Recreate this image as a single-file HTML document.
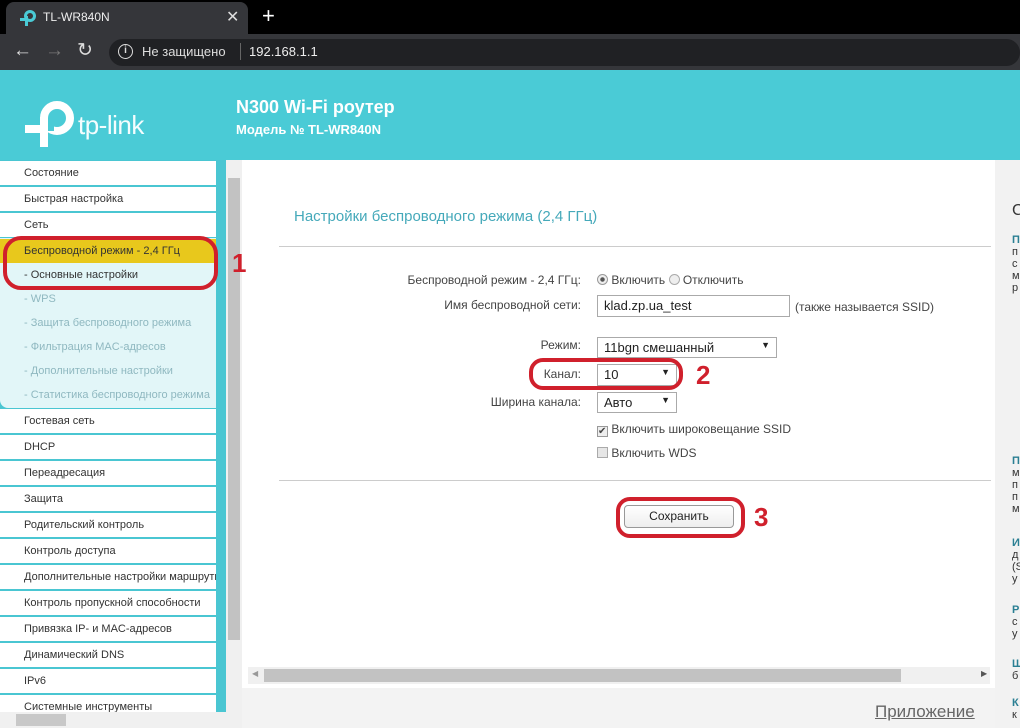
<!DOCTYPE html>
<html><head><meta charset="utf-8"><style>
*{margin:0;padding:0;box-sizing:border-box}
body{width:1020px;height:728px;overflow:hidden;background:#fff;font-family:"Liberation Sans",Arial,sans-serif;position:relative}
.a{position:absolute}
.menu div{position:absolute;left:0;width:216px;font-size:11px;color:#333;padding-left:24px;white-space:nowrap;overflow:hidden}
.lb{position:absolute;right:439px;font-size:12px;color:#444;text-align:right;white-space:nowrap}
.ct{position:absolute;left:597px;font-size:12px;color:#444;white-space:nowrap}
.sel{position:absolute;border:1px solid #aaa;background:#fff;font-size:13px;color:#222;padding:2px 6px}
.sel span{position:absolute;right:6px;top:2px;font-size:9px}
.ring{position:absolute;border:4px solid #d0202c;border-radius:14px}
.num{position:absolute;color:#d0202c;font-weight:bold;font-size:26px}
.rp{position:absolute;left:1012px;font-size:11px;color:#333;line-height:12px}
.rp b{color:#2a7f93}
</style></head><body>
<div class="a" style="left:0;top:0;width:1020px;height:34px;background:#000"></div>
<div class="a" style="left:6px;top:2px;width:242px;height:32px;background:#35363a;border-radius:8px 8px 0 0"></div>
<svg class="a" style="left:19px;top:9px" width="18" height="18" viewBox="0 0 18 18"><circle cx="11" cy="7" r="4.5" fill="none" stroke="#4acbd6" stroke-width="3"/><rect x="6" y="7" width="3" height="10" fill="#4acbd6"/><rect x="1" y="9" width="8" height="3" fill="#4acbd6"/></svg>
<div class="a" style="left:43px;top:10px;font-size:12px;color:#eee">TL-WR840N</div>
<div class="a" style="left:226px;top:7px;font-size:16px;color:#ddd">✕</div>
<div class="a" style="left:262px;top:3px;font-size:22px;color:#fff">+</div>
<div class="a" style="left:0;top:34px;width:1020px;height:36px;background:#35363a"></div>
<div class="a" style="left:13px;top:40px;font-size:19px;color:#ddd">←</div>
<div class="a" style="left:45px;top:40px;font-size:19px;color:#777">→</div>
<div class="a" style="left:77px;top:39px;font-size:19px;color:#ddd">↻</div>
<div class="a" style="left:109px;top:39px;width:911px;height:27px;background:#202124;border-radius:14px"></div>
<div class="a" style="left:118px;top:44px;width:15px;height:15px;border:1.5px solid #ddd;border-radius:50%;font-size:10px;color:#ddd;text-align:center;line-height:12px;font-weight:bold">i</div>
<div class="a" style="left:142px;top:44px;font-size:13px;color:#ddd">Не защищено</div>
<div class="a" style="left:240px;top:43px;width:1px;height:17px;background:#666"></div>
<div class="a" style="left:249px;top:44px;font-size:13px;color:#eee">192.168.1.1</div>
<div class="a" style="left:0;top:70px;width:1020px;height:90px;background:#4acbd6"></div>
<svg class="a" style="left:20px;top:96px" width="60" height="56" viewBox="0 0 60 56"><circle cx="37" cy="22" r="13" fill="none" stroke="#fff" stroke-width="8"/><rect x="20" y="21" width="8" height="30" fill="#fff"/><rect x="5" y="29" width="23" height="8" fill="#fff"/><rect x="28" y="22" width="6" height="13" fill="#4acbd6"/></svg>
<div class="a" style="left:78px;top:110px;font-size:26px;color:#f4fdfe;letter-spacing:-0.5px">tp-link</div>
<div class="a" style="left:236px;top:97px;font-size:18px;color:#fff;font-weight:bold">N300 Wi-Fi роутер</div>
<div class="a" style="left:236px;top:122px;font-size:13px;color:#fff;font-weight:bold">Модель № TL-WR840N</div>
<div class="a" style="left:0;top:160px;width:226px;height:568px;background:#4ac6d2"></div>
<div class="a" style="left:0;top:238px;width:216px;height:170px;background:#e2f6f8;border-radius:0 0 0 8px"></div>
<div class="menu">
<div style="top:161px;height:24px;line-height:24px;background:#fff">Состояние</div>
<div style="top:187px;height:24px;line-height:24px;background:#fff">Быстрая настройка</div>
<div style="top:213px;height:24px;line-height:24px;background:#fff">Сеть</div>
<div style="top:239px;height:24px;line-height:24px;background:#e8c81c">Беспроводной режим - 2,4 ГГц</div>
<div style="top:263px;height:24px;line-height:24px;padding-left:24px">- Основные настройки</div>
<div style="top:287px;height:24px;line-height:24px;color:#8fb8c0">- WPS</div>
<div style="top:311px;height:24px;line-height:24px;color:#8fb8c0">- Защита беспроводного режима</div>
<div style="top:335px;height:24px;line-height:24px;color:#8fb8c0">- Фильтрация MAC-адресов</div>
<div style="top:359px;height:24px;line-height:24px;color:#8fb8c0">- Дополнительные настройки</div>
<div style="top:383px;height:24px;line-height:24px;color:#8fb8c0">- Статистика беспроводного режима</div>
<div style="top:409px;height:24px;line-height:24px;background:#fff">Гостевая сеть</div>
<div style="top:435px;height:24px;line-height:24px;background:#fff">DHCP</div>
<div style="top:461px;height:24px;line-height:24px;background:#fff">Переадресация</div>
<div style="top:487px;height:24px;line-height:24px;background:#fff">Защита</div>
<div style="top:513px;height:24px;line-height:24px;background:#fff">Родительский контроль</div>
<div style="top:539px;height:24px;line-height:24px;background:#fff">Контроль доступа</div>
<div style="top:565px;height:24px;line-height:24px;background:#fff">Дополнительные настройки маршрутизации</div>
<div style="top:591px;height:24px;line-height:24px;background:#fff">Контроль пропускной способности</div>
<div style="top:617px;height:24px;line-height:24px;background:#fff">Привязка IP- и MAC-адресов</div>
<div style="top:643px;height:24px;line-height:24px;background:#fff">Динамический DNS</div>
<div style="top:669px;height:24px;line-height:24px;background:#fff">IPv6</div>
<div style="top:695px;height:18px;line-height:24px;background:#fff">Системные инструменты</div>
</div>
<div class="a" style="left:0;top:712px;width:226px;height:16px;background:#f0f0f0"></div>
<div class="a" style="left:16px;top:714px;width:50px;height:12px;background:#c8c8c8"></div>
<div class="a" style="left:226px;top:160px;width:16px;height:568px;background:#f0f0f0"></div>
<div class="a" style="left:228px;top:178px;width:12px;height:462px;background:#c2c2c2"></div>
<div class="ring" style="left:3px;top:236px;width:215px;height:54px;border-radius:18px"></div>
<div class="num" style="left:232px;top:248px">1</div>
<div class="a" style="left:294px;top:208px;font-size:15px;color:#45a9ba">Настройки беспроводного режима (2,4 ГГц)</div>
<div class="a" style="left:279px;top:246px;width:712px;height:1px;background:#ccc"></div>
<div class="lb" style="top:273px">Беспроводной режим - 2,4 ГГц:</div>
<div class="ct" style="top:273px"><span style="display:inline-block;width:11px;height:11px;border:1px solid #999;border-radius:50%;background:radial-gradient(#555 30%,#eee 40%);vertical-align:-1px"></span> Включить <span style="display:inline-block;width:11px;height:11px;border:1px solid #aaa;border-radius:50%;background:#eee;vertical-align:-1px"></span> Отключить</div>
<div class="lb" style="top:298px">Имя беспроводной сети:</div>
<div class="sel" style="left:597px;top:295px;width:193px;height:22px;font-size:13px">klad.zp.ua_test</div>
<div class="a" style="left:795px;top:300px;font-size:12px;color:#444">(также называется SSID)</div>
<div class="lb" style="top:338px">Режим:</div>
<div class="sel" style="left:597px;top:337px;width:180px;height:21px">11bgn смешанный<span>▼</span></div>
<div class="lb" style="top:367px">Канал:</div>
<div class="sel" style="left:597px;top:364px;width:80px;height:22px">10<span>▼</span></div>
<div class="lb" style="top:395px">Ширина канала:</div>
<div class="sel" style="left:597px;top:392px;width:80px;height:21px">Авто<span>▼</span></div>
<div class="ct" style="top:422px"><span style="display:inline-block;width:11px;height:11px;border:1px solid #999;background:#eee;vertical-align:-1px;font-size:10px;line-height:9px">✔</span> Включить широковещание SSID</div>
<div class="ct" style="top:446px"><span style="display:inline-block;width:11px;height:11px;border:1px solid #aaa;background:#e6e6e6;vertical-align:-1px"></span> Включить WDS</div>
<div class="ring" style="left:529px;top:358px;width:154px;height:32px;border-radius:14px"></div>
<div class="num" style="left:696px;top:360px">2</div>
<div class="a" style="left:279px;top:480px;width:712px;height:1px;background:#ccc"></div>
<div class="a" style="left:624px;top:505px;width:110px;height:23px;border:1px solid #999;border-radius:4px;background:linear-gradient(#fff,#eee);font-size:12px;text-align:center;line-height:21px;color:#222">Сохранить</div>
<div class="ring" style="left:616px;top:497px;width:129px;height:41px;border-radius:14px"></div>
<div class="num" style="left:754px;top:502px">3</div>
<div class="a" style="left:248px;top:667px;width:742px;height:17px;background:#f0f0f0"></div>
<div class="a" style="left:264px;top:669px;width:637px;height:13px;background:#c2c2c2"></div>
<div class="a" style="left:252px;top:669px;font-size:8px;color:#999">◀</div>
<div class="a" style="left:981px;top:669px;font-size:8px;color:#555">▶</div>
<div class="a" style="left:242px;top:688px;width:753px;height:40px;background:#f3f3f3"></div>
<div class="a" style="left:875px;top:702px;font-size:17px;color:#666;text-decoration:underline">Приложение</div>
<div class="a" style="left:995px;top:160px;width:25px;height:568px;background:#f2f2f2"></div>
<div class="a" style="left:1012px;top:202px;font-size:16px;color:#333">С</div>
<div class="rp" style="top:234px"><b>П</b><br>п<br>с<br>м<br>р</div>
<div class="rp" style="top:455px"><b>П</b><br>м<br>п<br>п<br>м</div>
<div class="rp" style="top:537px"><b>И</b><br>д<br>(S<br>у</div>
<div class="rp" style="top:604px"><b>Р</b><br>с<br>у</div>
<div class="rp" style="top:658px"><b>Ш</b><br>б</div>
<div class="rp" style="top:697px"><b>К</b><br>к</div>
</body></html>
